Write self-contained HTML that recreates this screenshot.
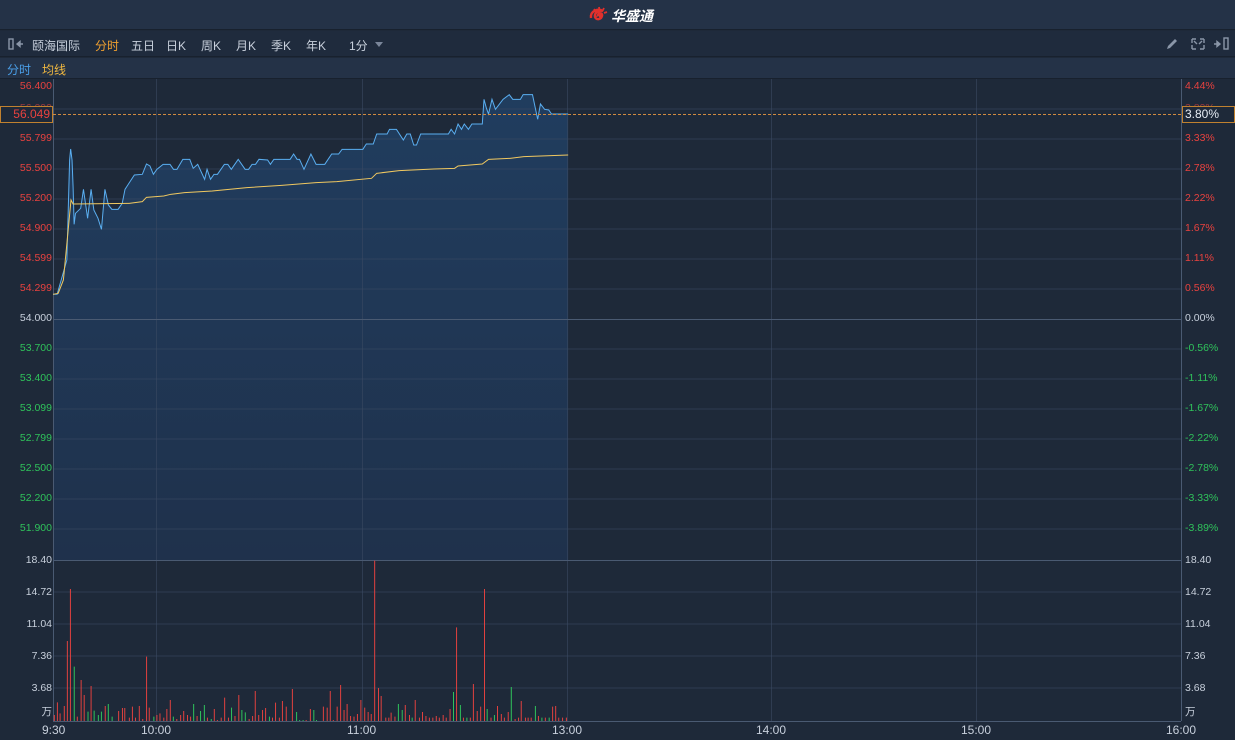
<!DOCTYPE html>
<html><head><meta charset="utf-8"><style>
*{margin:0;padding:0;box-sizing:border-box}
body{width:1235px;height:740px;background:#1e2939;font-family:"Liberation Sans","Noto Sans CJK SC",sans-serif;overflow:hidden;position:relative;color:#c8d0dc}
.hdr{position:absolute;left:0;top:0;width:1235px;height:30px;background:#243247;border-bottom:1px solid #18212e}
.tb{position:absolute;left:0;top:31px;width:1235px;height:26px;background:#1f2b3d;border-bottom:1px solid #18212e;font-size:12px}
.tb span{position:absolute;top:6px}
.sub{position:absolute;left:0;top:58px;width:1235px;height:21px;background:#243247;border-bottom:1px solid #18212e;font-size:12px}
.sub span{position:absolute;top:3px}
.l{position:absolute;font-size:10.5px;line-height:12px}
.L{right:1183px;text-align:right}
.R{left:1185px}
.r{color:#e8423f}.g{color:#2fc25b}.w{color:#c8d0dc}
</style></head><body>
<div class="hdr">
<svg style="position:absolute;left:588px;top:6px" width="22" height="18" viewBox="0 0 22 18"><path d="M3 12 C2 5 10 2 15 5 C12 4 6 6 7 11 C8 14 13 14 14 10 C15 7 11 6 10 9 C12 8 13 10 11 11" stroke="#e0302c" stroke-width="2.4" fill="none"/><path d="M6 3 L8 6 M11 1 L11.5 4.5 M16 2 L14.5 5 M19 6 L16 7" stroke="#e0302c" stroke-width="1.8"/></svg>
<span style="position:absolute;left:611px;top:6px;font-size:14px;font-weight:bold;color:#fff;font-style:italic">华盛通</span>
</div>
<div class="tb">
<svg style="position:absolute;left:8px;top:7px" width="16" height="12"><rect x="1" y="1" width="4" height="10" fill="none" stroke="#8a96a8" stroke-width="1.4"/><path d="M9 6H15M9 6L12 3.5V8.5Z" stroke="#8a96a8" fill="#8a96a8" stroke-width="1.4"/></svg>
<span style="left:32px;color:#c8d0dc">颐海国际</span>
<span style="left:95px;color:#f0a030">分时</span>
<span style="left:131px">五日</span><span style="left:166px">日K</span><span style="left:201px">周K</span><span style="left:236px">月K</span><span style="left:271px">季K</span><span style="left:306px">年K</span><span style="left:349px">1分</span>
<svg style="position:absolute;left:375px;top:11px" width="10" height="6"><path d="M0 0H8L4 5Z" fill="#7a869a"/></svg>
<svg style="position:absolute;left:1165px;top:6px" width="70" height="14"><path d="M2 12L3 9L10 2L12 4L5 11Z" fill="#8a96a8"/><path d="M27 2H31M27 2V6M39 2H35M39 2V6M27 12H31M27 12V8M39 12H35M39 12V8M29 4L32 7M37 4L34 7" stroke="#8a96a8" stroke-width="1.4" fill="none"/><path d="M49 7H55M55 7L52 4.5V9.5Z" stroke="#8a96a8" fill="#8a96a8" stroke-width="1.4"/><rect x="59" y="1" width="4" height="11" fill="none" stroke="#8a96a8" stroke-width="1.4"/></svg>
</div>
<div class="sub"><span style="left:7px;color:#4a9fe8">分时</span><span style="left:42px;color:#f0b840">均线</span></div>

<svg style="position:absolute;left:0;top:0" width="1235" height="740">
<defs><linearGradient id="fg" x1="0" y1="0" x2="0" y2="1"><stop offset="0" stop-color="#214268"/><stop offset="1" stop-color="#1f3350"/></linearGradient></defs>
<g transform="matrix(0.3462 0 0 0.3333 39.15 80)">
<path fill="url(#fg)" opacity="0.8" d="M40 643L52 643L80 540L88 240L91 207L95 240L98 320L101 433L105 400L120 385L128 328L140 415L150 328L158 390L170 415L180 448L190 328L200 375L210 388L228 388L240 370L248 328L275 285L298 283L310 252L320 258L330 283L340 268L358 253L378 253L388 268L398 268L415 238L435 238L445 265L458 253L478 298L485 268L495 298L505 283L515 283L535 253L545 253L555 268L575 238L595 268L605 268L615 253L625 253L635 238L660 240L668 253L678 238L725 238L735 222L745 238L752 238L765 268L785 222L800 253L825 253L845 222L865 222L875 208L935 208L945 192L965 192L975 162L1005 162L1012 148L1032 148L1052 180L1062 162L1072 162L1082 195L1090 195L1102 162L1182 162L1190 148L1200 162L1210 132L1220 148L1228 132L1240 148L1250 132L1280 132L1285 58L1292 85L1298 102L1308 58L1318 88L1340 58L1358 44L1368 58L1390 58L1398 44L1425 44L1440 118L1448 72L1460 88L1472 90L1480 102L1528 102L1528 1440L40 1440Z"/>
</g>
<g stroke="#3a4a62" stroke-opacity="0.6" stroke-width="1">
<path d="M53 109H1181M53 139H1181M53 169H1181M53 199H1181M53 229H1181M53 259H1181M53 289H1181M53 349H1181M53 379H1181M53 409H1181M53 439H1181M53 469H1181M53 499H1181M53 529H1181M53 592H1181M53 624H1181M53 656H1181M53 688H1181"/>
<path d="M156.5 79V721M362.5 79V721M567.5 79V721M771.5 79V721M976.5 79V721"/>
</g>
<path d="M53.5 79V721M1181.5 79V721M53 319.5H1181M53 560.5H1181M53 721.5H1181" stroke="#4a5a72"/>
<g transform="matrix(0.3462 0 0 0.3333 39.15 80)">
<path fill="none" stroke="#5aaef0" stroke-width="1" vector-effect="non-scaling-stroke" d="M40 643L52 643L80 540L88 240L91 207L95 240L98 320L101 433L105 400L120 385L128 328L140 415L150 328L158 390L170 415L180 448L190 328L200 375L210 388L228 388L240 370L248 328L275 285L298 283L310 252L320 258L330 283L340 268L358 253L378 253L388 268L398 268L415 238L435 238L445 265L458 253L478 298L485 268L495 298L505 283L515 283L535 253L545 253L555 268L575 238L595 268L605 268L615 253L625 253L635 238L660 240L668 253L678 238L725 238L735 222L745 238L752 238L765 268L785 222L800 253L825 253L845 222L865 222L875 208L935 208L945 192L965 192L975 162L1005 162L1012 148L1032 148L1052 180L1062 162L1072 162L1082 195L1090 195L1102 162L1182 162L1190 148L1200 162L1210 132L1220 148L1228 132L1240 148L1250 132L1280 132L1285 58L1292 85L1298 102L1308 58L1318 88L1340 58L1358 44L1368 58L1390 58L1398 44L1425 44L1440 118L1448 72L1460 88L1472 90L1480 102L1528 102"/>
<path fill="none" stroke="#f0c860" stroke-width="1" vector-effect="non-scaling-stroke" d="M40 643L55 640L70 600L82 470L92 360L98 372L260 370L298 365L310 352L360 348L380 343L420 338L500 333L600 323L700 316L800 308L860 305L960 295L975 280L1040 272L1140 267L1200 265L1210 258L1280 252L1298 238L1360 235L1400 230L1528 225"/>
</g>
<path d="M53 114.5H1181" stroke="#d08a40" stroke-dasharray="3,2"/>
<g transform="matrix(0.3827 0 0 0.3333 0 540)">
<path fill="none" stroke="#e0413f" stroke-width="1" vector-effect="non-scaling-stroke" d="M142 543V525M150 543V487M157 543V520M168 543V498M176 543V303M184 543V147M202 543V530M212 543V420M220 543V465M238 543V438M275 543V498M310 543V513M320 543V504M326 543V504M338 543V533M346 543V500M354 543V533M364 543V498M373 543V537M383 543V350M390 543V503M410 543V525M418 543V520M428 543V533M436 543V507M445 543V480M462 543V537M472 543V525M480 543V513M490 543V525M498 543V530M515 543V528M542 543V533M560 543V507M568 543V540M578 543V533M587 543V473M597 543V533M614 543V528M624 543V465M651 543V537M660 543V528M667 543V453M676 543V525M686 543V510M694 543V504M712 543V533M720 543V488M730 543V533M738 543V483M748 543V500M764 543V447M800 543V540M811 543V507M845 543V500M855 543V503M863 543V453M871 543V540M881 543V500M890 543V435M899 543V510M907 543V492M916 543V528M925 543V530M934 543V522M943 543V480M953 543V503M962 543V516M970 543V522M979 543V62M989 543V444M996 543V468M1008 543V533M1016 543V533M1022 543V518M1032 543V530M1059 543V495M1070 543V525M1085 543V480M1096 543V533M1104 543V516M1113 543V528M1122 543V533M1131 543V533M1140 543V528M1148 543V533M1158 543V525M1166 543V533M1176 543V507M1193 543V262M1211 543V533M1229 543V533M1237 543V432M1247 543V513M1256 543V500M1266 543V147M1283 543V533M1300 543V498M1310 543V522M1318 543V533M1328 543V516M1346 543V537M1355 543V533M1362 543V483M1373 543V533M1380 543V533M1388 543V533M1407 543V528M1425 543V533M1444 543V500M1452 543V498M1460 543V533M1470 543V533M1480 543V533"/>
<path fill="none" stroke="#2fc25b" stroke-width="1" vector-effect="non-scaling-stroke" d="M194 543V380M230 543V515M246 543V512M257 543V525M265 543V515M283 543V492M293 543V530M402 543V530M453 543V530M506 543V492M524 543V513M534 543V495M552 543V537M605 543V503M632 543V510M641 543V517M704 543V530M775 543V516M783 543V540M792 543V540M820 543V510M827 543V540M1041 543V492M1051 543V510M1077 543V533M1185 543V456M1203 543V495M1220 543V533M1273 543V507M1292 543V525M1336 543V441M1399 543V498M1416 543V533M1435 543V533"/>
</g>
</svg>

<div class="l L r" style="top:80px">56.400</div><div class="l L r" style="top:132px">55.799</div><div class="l L r" style="top:162px">55.500</div><div class="l L r" style="top:192px">55.200</div><div class="l L r" style="top:222px">54.900</div><div class="l L r" style="top:252px">54.599</div><div class="l L r" style="top:282px">54.299</div><div class="l L w" style="top:312px">54.000</div><div class="l L g" style="top:342px">53.700</div><div class="l L g" style="top:372px">53.400</div><div class="l L g" style="top:402px">53.099</div><div class="l L g" style="top:432px">52.799</div><div class="l L g" style="top:462px">52.500</div><div class="l L g" style="top:492px">52.200</div><div class="l L g" style="top:522px">51.900</div>
<div class="l R r" style="top:80px">4.44%</div><div class="l R r" style="top:132px">3.33%</div><div class="l R r" style="top:162px">2.78%</div><div class="l R r" style="top:192px">2.22%</div><div class="l R r" style="top:222px">1.67%</div><div class="l R r" style="top:252px">1.11%</div><div class="l R r" style="top:282px">0.56%</div><div class="l R w" style="top:312px">0.00%</div><div class="l R g" style="top:342px">-0.56%</div><div class="l R g" style="top:372px">-1.11%</div><div class="l R g" style="top:402px">-1.67%</div><div class="l R g" style="top:432px">-2.22%</div><div class="l R g" style="top:462px">-2.78%</div><div class="l R g" style="top:492px">-3.33%</div><div class="l R g" style="top:522px">-3.89%</div>
<div class="l L r" style="top:102px;opacity:.6">56.099</div><div class="l R r" style="top:102px;opacity:.6">3.89%</div>
<div style="position:absolute;left:0;top:106px;width:53px;height:17px;border:1px solid #c0812f;background:#1e2939;color:#e8423f;font-size:12px;text-align:right;padding-right:2px;line-height:15px">56.049</div>
<div style="position:absolute;left:1182px;top:106px;width:53px;height:17px;border:1px solid #c0812f;background:#1e2939;color:#e6ecf4;font-size:12px;padding-left:2px;line-height:15px">3.80%</div>
<div class="l L w" style="top:554px">18.40</div><div class="l L w" style="top:586px">14.72</div><div class="l L w" style="top:618px">11.04</div><div class="l L w" style="top:650px">7.36</div><div class="l L w" style="top:682px">3.68</div><div class="l L w" style="top:706px">万</div>
<div class="l R w" style="top:554px">18.40</div><div class="l R w" style="top:586px">14.72</div><div class="l R w" style="top:618px">11.04</div><div class="l R w" style="top:650px">7.36</div><div class="l R w" style="top:682px">3.68</div><div class="l R w" style="top:706px">万</div>
<div class="l w" style="top:724px;left:42px;font-size:12px">9:30</div><div class="l w" style="top:724px;left:141px;font-size:12px">10:00</div><div class="l w" style="top:724px;left:347px;font-size:12px">11:00</div><div class="l w" style="top:724px;left:552px;font-size:12px">13:00</div><div class="l w" style="top:724px;left:756px;font-size:12px">14:00</div><div class="l w" style="top:724px;left:961px;font-size:12px">15:00</div><div class="l w" style="top:724px;left:1166px;font-size:12px">16:00</div>
</body></html>
